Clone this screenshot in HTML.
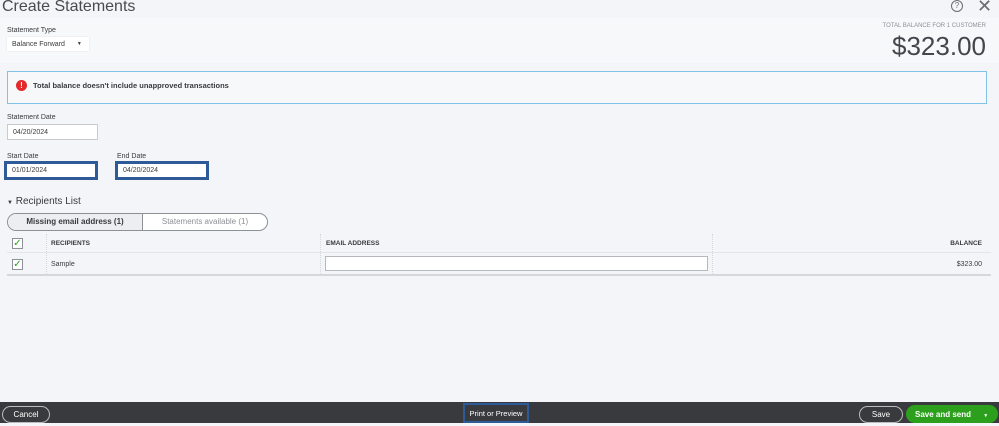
<!DOCTYPE html><html><head><style>
*{box-sizing:border-box;margin:0;padding:0}
body{width:999px;height:423px;overflow:hidden;background:#f4f5f8;font-family:"Liberation Sans",sans-serif;color:#393a3d;position:relative}
.a{position:absolute}
.lbl{font-size:7px;color:#393a3d}
.inp{position:absolute;background:#fff;border:1px solid #c9cbd0;font-size:7px;padding-left:5px;display:flex;align-items:center;color:#393a3d}
.chk{position:absolute;width:11px;height:11px;border:1px solid #8d9096;background:#fff;color:#2ca01c;font-size:10px;line-height:9px;text-align:center}
</style></head><body>
<div class="a" style="left:0;top:18px;width:999px;height:45px;background:#f7f8fa"></div>
<div class="a" style="left:2px;top:-2px;font-size:16px;color:#4a4b50">Create Statements</div>
<div class="a" style="left:951px;top:0;width:12px;height:12px;border:1.5px solid #6b6c72;border-radius:50%;font-size:8px;text-align:center;line-height:10px;color:#6b6c72">?</div>
<div class="a" style="left:977px;top:-4px;font-size:18px;color:#6b6c72">✕</div>
<div class="a" style="right:13px;top:23px;font-size:6px;color:#8d9096">TOTAL BALANCE FOR 1 CUSTOMER</div>
<div class="a" style="right:13px;top:31px;font-size:26px;color:#45464b">$323.00</div>
<div class="a lbl" style="left:7px;top:27px">Statement Type</div>
<div class="inp" style="left:7px;top:37px;width:82px;height:14px;border:none;box-shadow:0 0 1px #ccc">Balance Forward <span style="margin-left:12px;font-size:5px">▼</span></div>
<div class="a" style="left:7px;top:71px;width:980px;height:33px;border:1px solid #7fc4e8;background:#f7f8fa"></div>
<div class="a" style="left:16px;top:80px;width:11px;height:11px;border-radius:50%;background:#e32a2a;color:#fff;font-size:8px;font-weight:bold;text-align:center;line-height:11px">!</div>
<div class="a" style="left:33px;top:81px;font-size:7.5px;font-weight:bold">Total balance doesn't include unapproved transactions</div>
<div class="a lbl" style="left:7px;top:114px">Statement Date</div>
<div class="inp" style="left:7px;top:124px;width:91px;height:16px">04/20/2024</div>
<div class="a lbl" style="left:7px;top:153px">Start Date</div>
<div class="inp" style="left:4px;top:161px;width:94px;height:19px;border:3px solid #2e5b97">01/01/2024</div>
<div class="a lbl" style="left:117px;top:153px">End Date</div>
<div class="inp" style="left:115px;top:161px;width:94px;height:19px;border:3px solid #2e5b97">04/20/2024</div>
<div class="a" style="left:7px;top:196px;font-size:10px"><span style="font-size:6px">▼</span> Recipients List</div>
<div class="a" style="left:7px;top:213px;width:261px;height:18px;border:1px solid #8d9096;border-radius:9px;display:flex;font-size:8px;background:#fff">
<div style="width:135px;background:#eceef1;border-radius:9px 0 0 9px;border-right:1px solid #8d9096;text-align:center;line-height:16px;font-weight:bold">Missing email address (1)</div>
<div style="flex:1;text-align:center;line-height:16px;color:#8d9096">Statements available (1)</div></div>
<div class="a" style="left:7px;top:234px;width:984px;height:19px;border-bottom:1px solid #e3e5e8"></div>
<div class="a" style="left:7px;top:274px;width:984px;height:2px;background:#d4d7dc"></div>
<div class="a" style="left:46px;top:234px;height:40px;border-left:1px dotted #d4d7dc"></div>
<div class="a" style="left:320px;top:234px;height:40px;border-left:1px dotted #d4d7dc"></div>
<div class="a" style="left:712px;top:234px;height:40px;border-left:1px dotted #d4d7dc"></div>
<div class="chk" style="left:12px;top:238px">✓</div>
<div class="chk" style="left:12px;top:259px">✓</div>
<div class="a" style="left:51px;top:240px;font-size:6.5px;font-weight:bold">RECIPIENTS</div>
<div class="a" style="left:326px;top:240px;font-size:6.5px;font-weight:bold">EMAIL ADDRESS</div>
<div class="a" style="right:17px;top:240px;font-size:6.5px;font-weight:bold">BALANCE</div>
<div class="a" style="left:51px;top:261px;font-size:7px">Sample</div>
<div class="a" style="left:325px;top:256px;width:383px;height:15px;background:#fff;border:1px solid #b5b8bd"></div>
<div class="a" style="right:17px;top:261px;font-size:7px">$323.00</div>
<div class="a" style="left:0;top:402px;width:999px;height:21px;background:#393a3d"></div>
<div class="a" style="left:2px;top:406px;width:48px;height:17px;border:1px solid #bbb;border-radius:9px;color:#fff;font-size:8px;text-align:center;line-height:15px">Cancel</div>
<div class="a" style="left:463px;top:403px;width:66px;height:20px;border:2px solid #2e5b97;color:#fff;font-size:7.5px;text-align:center;line-height:18px">Print or Preview</div>
<div class="a" style="left:859px;top:406px;width:44px;height:17px;border:1px solid #bbb;border-radius:9px;color:#fff;font-size:8px;text-align:center;line-height:15px">Save</div>
<div class="a" style="left:906px;top:405px;width:92px;height:18px;background:#2ca01c;border-radius:9px;color:#fff;font-size:8px;font-weight:bold;line-height:19px;padding-left:9px">Save and send <span style="margin-left:10px;font-size:5px">▼</span></div>
</body></html>
